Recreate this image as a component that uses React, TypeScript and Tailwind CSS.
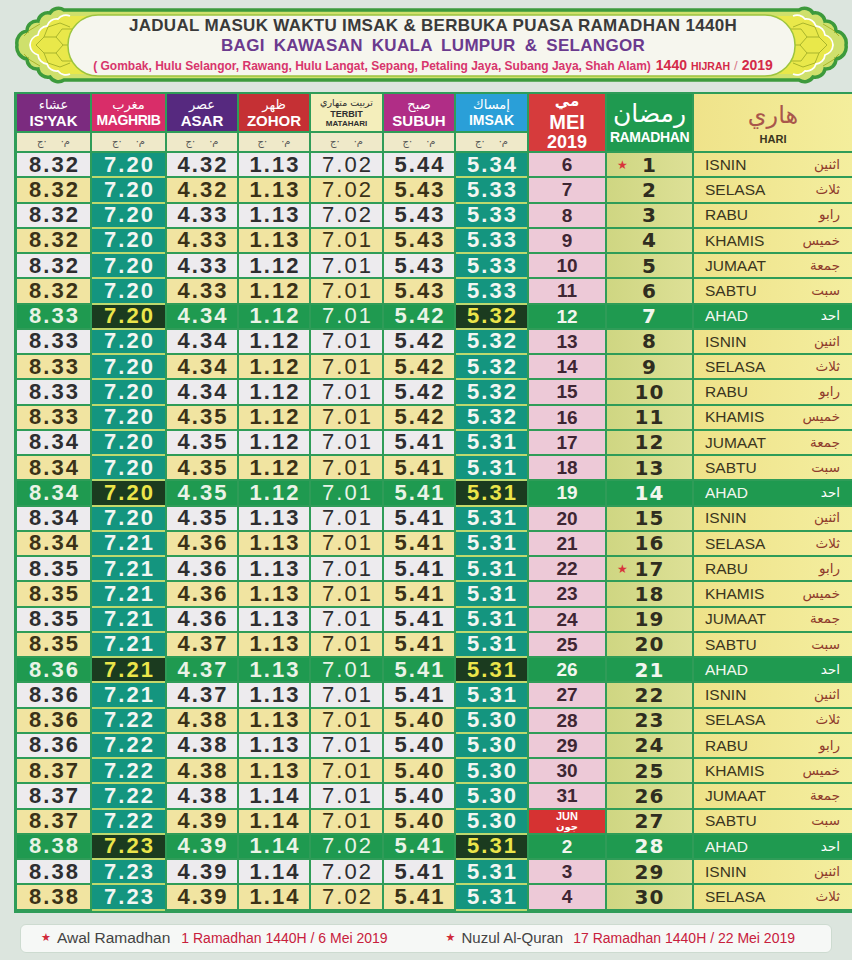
import React from "react";

const SANS = "font-['Liberation_Sans',Arial,sans-serif]";
const AR = "font-['DejaVu_Sans',sans-serif]";

const TIMES = [
  "8.32 7.20 4.32 1.13 7.02 5.44 5.34",
  "8.32 7.20 4.32 1.13 7.02 5.43 5.33",
  "8.32 7.20 4.33 1.13 7.02 5.43 5.33",
  "8.32 7.20 4.33 1.13 7.01 5.43 5.33",
  "8.32 7.20 4.33 1.12 7.01 5.43 5.33",
  "8.32 7.20 4.33 1.12 7.01 5.43 5.33",
  "8.33 7.20 4.34 1.12 7.01 5.42 5.32",
  "8.33 7.20 4.34 1.12 7.01 5.42 5.32",
  "8.33 7.20 4.34 1.12 7.01 5.42 5.32",
  "8.33 7.20 4.34 1.12 7.01 5.42 5.32",
  "8.33 7.20 4.35 1.12 7.01 5.42 5.32",
  "8.34 7.20 4.35 1.12 7.01 5.41 5.31",
  "8.34 7.20 4.35 1.12 7.01 5.41 5.31",
  "8.34 7.20 4.35 1.12 7.01 5.41 5.31",
  "8.34 7.20 4.35 1.13 7.01 5.41 5.31",
  "8.34 7.21 4.36 1.13 7.01 5.41 5.31",
  "8.35 7.21 4.36 1.13 7.01 5.41 5.31",
  "8.35 7.21 4.36 1.13 7.01 5.41 5.31",
  "8.35 7.21 4.36 1.13 7.01 5.41 5.31",
  "8.35 7.21 4.37 1.13 7.01 5.41 5.31",
  "8.36 7.21 4.37 1.13 7.01 5.41 5.31",
  "8.36 7.21 4.37 1.13 7.01 5.41 5.31",
  "8.36 7.22 4.38 1.13 7.01 5.40 5.30",
  "8.36 7.22 4.38 1.13 7.01 5.40 5.30",
  "8.37 7.22 4.38 1.13 7.01 5.40 5.30",
  "8.37 7.22 4.38 1.14 7.01 5.40 5.30",
  "8.37 7.22 4.39 1.14 7.01 5.40 5.30",
  "8.38 7.23 4.39 1.14 7.02 5.41 5.31",
  "8.38 7.23 4.39 1.14 7.02 5.41 5.31",
  "8.38 7.23 4.39 1.14 7.02 5.41 5.31",
];

const MEI = [
  "6", "7", "8", "9", "10", "11", "12", "13", "14", "15", "16", "17", "18", "19", "20",
  "21", "22", "23", "24", "25", "26", "27", "28", "29", "30", "31", "JUN", "2", "3", "4",
];

const DAYS = ["ISNIN", "SELASA", "RABU", "KHAMIS", "JUMAAT", "SABTU", "AHAD"];
const JAWI: Record<string, string> = {
  ISNIN: "اثنين",
  SELASA: "ثلاث",
  RABU: "رابو",
  KHAMIS: "خميس",
  JUMAAT: "جمعة",
  SABTU: "سبت",
  AHAD: "احد",
};

const HEADS = [
  { ar: "عشاء", en: "IS'YAK", bg: "bg-[#7b2b7f]", en2: "text-[15px]" },
  { ar: "مغرب", en: "MAGHRIB", bg: "bg-[#d92d69]", en2: "text-[14px] tracking-[-0.4px]" },
  { ar: "عصر", en: "ASAR", bg: "bg-[#56297f]", en2: "text-[15px]" },
  { ar: "ظهر", en: "ZOHOR", bg: "bg-[#c53034]", en2: "text-[15px]" },
  null,
  { ar: "صبح", en: "SUBUH", bg: "bg-[#b02d86]", en2: "text-[15px]" },
  { ar: "إمساك", en: "IMSAK", bg: "bg-[#2a9fd8]", en2: "text-[14px]" },
];

function Banner() {
  const leftOrn = (
    <g>
      <path
        d="M100 16 L70 16 A10 10 0 0 0 58 19 A10 10 0 0 0 47 26 A10 10 0 0 0 38 35 A11 11 0 0 0 30 45 A11 11 0 0 0 38 55 A10 10 0 0 0 47 64 A10 10 0 0 0 58 71 A10 10 0 0 0 70 74 L100 74 Z"
        fill="#e9e84a"
      />
      <path
        d="M70 16 A10 10 0 0 0 58 19 A10 10 0 0 0 47 26 A10 10 0 0 0 38 35 A11 11 0 0 0 30 45 A11 11 0 0 0 38 55 A10 10 0 0 0 47 64 A10 10 0 0 0 58 71 A10 10 0 0 0 70 74"
        fill="none"
        stroke="#ffffff"
        strokeWidth="1.8"
      />
      <g fill="none" stroke="#a9b52c" strokeWidth="1">
        <path d="M36 45 L44 37 L56 37 L63 45 L56 53 L44 53 Z" />
        <path d="M44 37 L48 27 L60 23 L70 27" />
        <path d="M56 37 L62 29 L74 29" />
        <path d="M44 53 L48 63 L60 67 L70 63" />
        <path d="M56 53 L62 61 L74 61" />
        <path d="M63 45 L76 45" />
        <path d="M24 36 L30 30 L40 24" />
        <path d="M24 54 L30 60 L40 66" />
      </g>
    </g>
  );
  return (
    <div className="relative h-[90px] w-full">
      <svg className="absolute inset-0 h-full w-full" viewBox="0 0 852 90" preserveAspectRatio="none">
        <path
          d="M64 10 L799 10 A10 10 0 0 1 813 13 A10 10 0 0 1 825 21 A10 10 0 0 1 836 31 A12 12 0 0 1 846 45 A12 12 0 0 1 836 59 A10 10 0 0 1 825 69 A10 10 0 0 1 813 77 A10 10 0 0 1 799 80 L64 80 A10 10 0 0 1 50 77 A10 10 0 0 1 38 69 A10 10 0 0 1 27 59 A12 12 0 0 1 17 45 A12 12 0 0 1 27 31 A10 10 0 0 1 38 21 A10 10 0 0 1 50 13 A10 10 0 0 1 64 10 Z"
          fill="#cfe06c"
          stroke="#3d9a3c"
          strokeWidth="3.5"
        />
        {leftOrn}
        <g transform="translate(863,0) scale(-1,1)">{leftOrn}</g>
        <rect x="68" y="15" width="727" height="61" rx="30" fill="#f6f6ee" stroke="#9cc43e" strokeWidth="1.5" />
      </svg>
      <div className="relative flex flex-col items-center pt-[16px] pl-[14px]">
        <div className="text-[17px] leading-[20px] font-bold tracking-[0.3px] text-[#3a3a3a]">
          JADUAL MASUK WAKTU IMSAK &amp; BERBUKA PUASA RAMADHAN 1440H
        </div>
        <div className="text-[17px] leading-[20px] font-bold tracking-[0.3px] [word-spacing:4px] text-[#6b3a8e]">
          BAGI KAWASAN KUALA LUMPUR &amp; SELANGOR
        </div>
        <div className="flex items-baseline text-[12px] leading-[18px] font-bold text-[#d8356c] whitespace-nowrap">
          <span>( Gombak, Hulu Selangor, Rawang, Hulu Langat, Sepang, Petaling Jaya, Subang Jaya, Shah Alam)</span>
          <span className="ml-[5px] text-[14px] text-[#d42a48]">1440</span>
          <span className="ml-[4px] text-[10.5px] text-[#d42a48]">HIJRAH</span>
          <span className="mx-[4px] text-[13px] font-normal text-[#d87a8a]">/</span>
          <span className="text-[14px] text-[#d42a48]">2019</span>
        </div>
      </div>
    </div>
  );
}

function Table() {
  return (
    <div
      className={`mt-[2px] ml-[14px] grid grid-cols-[73px_73px_70px_70px_71px_70px_71px_76px_85px_158px] grid-rows-[37px_18px_repeat(30,23.25px)] gap-[2px] bg-[#2f9c58] pl-[3px] pt-[2px] pb-[4px]`}
    >
      {HEADS.map((h, i) =>
        h ? (
          <div key={"h" + i} className={`flex flex-col items-center justify-center text-white ${h.bg}`}>
            <span className={`${AR} text-[13px] leading-[15px]`}>{h.ar}</span>
            <span className={`font-bold leading-[17px] ${h.en2}`}>{h.en}</span>
          </div>
        ) : (
          <div key="terbit" className="flex flex-col items-center justify-center bg-[#f4eebb] text-[#2f2f2f]">
            <span className={`${AR} text-[9.5px] leading-[12px]`}>تربيت متهاري</span>
            <span className="text-[9px] leading-[10px] font-bold">TERBIT</span>
            <span className="text-[8px] leading-[9px] font-bold">MATAHARI</span>
          </div>
        )
      )}
      <div className="row-span-2 flex flex-col items-center justify-center bg-[#d63b3c] text-white">
        <span className={`${AR} mb-[3px] text-[15px] leading-[15px] font-bold`}>مي</span>
        <span className="text-[20px] leading-[20px] font-bold">MEI</span>
        <span className="mt-[1px] text-[18px] leading-[18px] font-bold">2019</span>
      </div>
      <div className="row-span-2 flex flex-col items-center justify-center bg-[#1f9a50] text-white">
        <span className={`${AR} text-[25px] leading-[30px]`}>رمضان</span>
        <span className="text-[14px] leading-[17px] font-bold tracking-[-0.4px]">RAMADHAN</span>
      </div>
      <div className="row-span-2 flex flex-col items-center justify-center bg-linear-to-r from-[#efe38a] to-[#f4ee9c]">
        <span className={`${AR} text-[24px] leading-[30px] text-[#a9564b]`}>هاري</span>
        <span className="mt-[3px] text-[11px] leading-[13px] font-bold text-[#3a3520]">HARI</span>
      </div>
      {HEADS.map((_, i) => (
        <div
          key={"s" + i}
          className={`${AR} flex items-center justify-center gap-[14px] bg-[#efe9c9] text-[10px] leading-none text-[#555]`}
        >
          <span>ج·</span>
          <span>·م</span>
        </div>
      ))}
      {TIMES.map((line, i) => {
        const di = i % 7;
        const day = DAYS[di];
        const ahad = di === 6;
        const yellow = di % 2 === 1;
        const vals = line.split(" ");
        const m = MEI[i];
        const r = i + 1;
        return (
          <React.Fragment key={"r" + i}>
            {vals.map((v, c) => {
              const special = c === 1 || c === 6;
              let cls = "";
              if (ahad) {
                cls = special
                  ? "bg-[#1b3b1f] text-[#ebe54a] shadow-[0_2px_0_#c5d86a]"
                  : "bg-[#1f9a50] text-[#eaf3e6]";
              } else if (special) {
                cls = "bg-[#14957f] text-[#f2f6f2] shadow-[0_2px_0_#bcd96e]";
              } else {
                cls = yellow ? "bg-[#f1e4a1] text-[#3b3217]" : "bg-[#edebee] text-[#2e2e30]";
              }
              const w = c === 4 ? "font-normal" : "font-bold";
              return (
                <div
                  key={c}
                  className={`flex items-center justify-center pl-[2px] text-[22px] leading-none tracking-[2px] ${w} ${cls}`}
                >
                  {v}
                </div>
              );
            })}
            {m === "JUN" ? (
              <div className="flex flex-col items-center justify-center bg-[#d63232] text-white">
                <span className="text-[11px] leading-[10px] font-bold">JUN</span>
                <span className={`${AR} text-[10px] leading-[11px] font-bold`}>جون</span>
              </div>
            ) : (
              <div
                className={`flex items-center justify-center text-[19px] leading-none font-bold ${
                  ahad ? "bg-[#1f9a50] text-[#f2f6ee]" : "bg-[#edc9d7] text-[#3e2633]"
                }`}
              >
                {m}
              </div>
            )}
            <div
              className={`relative flex items-center justify-center ${AR} text-[20px] leading-none font-bold tracking-[1px] ${
                ahad ? "bg-[#1f9a50] text-[#f2f6ee]" : "bg-linear-to-r from-[#cfd682] to-[#dde096] text-[#2f2d20]"
              }`}
            >
              {(r === 1 || r === 17) && (
                <span className={`${AR} absolute left-[10px] text-[12px] font-normal text-[#d8343a]`}>★</span>
              )}
              {r}
            </div>
            <div
              className={`flex items-center justify-between pl-[11px] pr-[12px] ${
                ahad ? "bg-[#1f9a50] text-[#f2f6ee]" : "bg-linear-to-r from-[#eee289] to-[#f4ee9f] text-[#3a3520]"
              }`}
            >
              <span className="text-[15.5px] leading-none">{day}</span>
              <span className={`${AR} text-[13.5px] leading-none ${ahad ? "text-white" : "text-[#8f3b2c]"}`}>
                {JAWI[day]}
              </span>
            </div>
          </React.Fragment>
        );
      })}
    </div>
  );
}

function Footer() {
  return (
    <div className="mt-[11px] ml-[20px] flex h-[29px] w-[812px] items-center rounded-[6px] border border-[#cddbd0] bg-[#f6f8f6] pl-[20px] whitespace-nowrap">
      <span className={`${AR} text-[11px] text-[#d02a3a]`}>★</span>
      <span className="ml-[6px] text-[15.5px] text-[#444]">Awal Ramadhan</span>
      <span className="ml-[11px] text-[14px] text-[#c8203c]">1 Ramadhan 1440H / 6 Mei 2019</span>
      <span className={`${AR} ml-[58px] text-[11px] text-[#d02a3a]`}>★</span>
      <span className="ml-[6px] text-[15px] text-[#444]">Nuzul Al-Quran</span>
      <span className="ml-[10px] text-[14px] text-[#c8203c]">17 Ramadhan 1440H / 22 Mei 2019</span>
    </div>
  );
}

export default function App() {
  return (
    <div className={`h-[960px] w-[852px] overflow-hidden bg-[#dce5de] ${SANS}`}>
      <Banner />
      <Table />
      <Footer />
    </div>
  );
}
